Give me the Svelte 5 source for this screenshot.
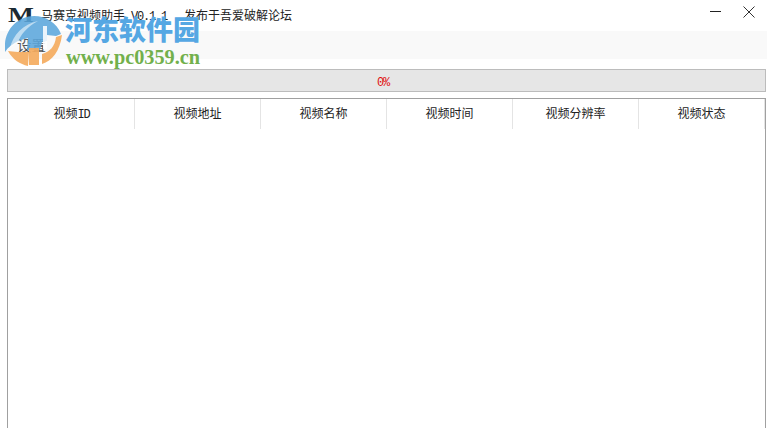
<script>
  const columns = [
    { cn: '视频', latin: 'ID' },
    { cn: '视频地址' },
    { cn: '视频名称' },
    { cn: '视频时间' },
    { cn: '视频分辨率' },
    { cn: '视频状态' }
  ];
</script>

<div class="window">
  <header class="titlebar">
    <span class="appicon">M</span>
    <span class="title">马赛克视频助手<span class="latin version">V0.1.1</span>发布于吾爱破解论坛</span>
    <div class="controls">
      <svg width="11" height="2" viewBox="0 0 11 2"><rect width="11" height="1" fill="#222" /></svg>
      <svg width="12" height="12" viewBox="0 0 12 12"><path d="M.5.5l11 11M11.500.5l-11 11" stroke="#333" fill="none" /></svg>
    </div>
  </header>
  <nav class="menu"><span>设置</span></nav>
  <div class="progress">0%</div>
  <section class="table">
    <div class="thead">
      {#each columns as c}
        <div class="th">{c.cn}{#if c.latin}<span class="latin">{c.latin}</span>{/if}</div>
      {/each}
    </div>
  </section>

  <div class="watermark">
    <svg class="logo" width="60" height="54" viewBox="0 0 60 54">
      <path d="M0 29C1 13 14 1 29 1c12 0 23 7 27 18l-5 2-9-1v6l-5 1-2 8H22l1-12-10 3C8 29 3 32 0 37Z" fill="#5ba6dc" opacity=".88" />
      <path d="M5 33C8 20 18 9 33 6 22 12 15 20 13 28 10 29 7 31 5 33Z" fill="#fff" opacity=".55" />
      <path d="M38 11h4v23h-4Z" fill="#fff" opacity=".85" />
      <path d="M3 36c5 9 12 13 20 15l1-14H13c-4 0-7-1-10-1Z" fill="#f4ab5e" opacity=".92" />
      <path d="M24 33h10v17H24Z" fill="#f4ab5e" opacity=".92" />
      <path d="M37 49c10-3 18-13 20-29l-6 2c-1 9-6 15-14 17Z" fill="#f4ab5e" opacity=".92" />
    </svg>
    <div class="wm-cn">河东软件园</div>
    <div class="wm-url">www.pc0359.cn</div>
  </div>
</div>

<style>
  :global(body) {
    margin: 0;
    background: #fff;
  }
  .window {
    position: relative;
    width: 767px;
    height: 428px;
    overflow: hidden;
    background: #fff;
    font-family: "Noto Sans CJK SC", "DejaVu Sans", sans-serif;
    color: #222;
    box-sizing: border-box;
    padding-left: 7px;
    padding-right: 1px;
  }
  .titlebar {
    height: 31px;
    margin-left: -7px;
    display: flex;
    align-items: center;
    position: relative;
  }
  .appicon {
    width: 33px;
    margin-left: 8px;
    margin-top: -2px;
    font: bold 22px/22px "Liberation Serif", serif;
    color: #1b2a33;
    transform: scaleX(1.25);
    transform-origin: left;
  }
  .title {
    font-size: 12px;
    white-space: pre;
    margin-top: -1px;
  }
  .latin {
    font-family: "Liberation Mono", monospace;
    font-size: 12px;
    letter-spacing: -1.2px;
  }
  .version {
    margin: 0 17px 0 6px;
  }
  .controls {
    margin-left: auto;
    margin-right: 11px;
    display: flex;
    align-items: center;
    gap: 22px;
    margin-top: -8px;
  }
  .menu {
    height: 28px;
    margin-left: -7px;
    margin-right: -1px;
    background: #f9f9f9;
    display: flex;
    align-items: center;
    padding-left: 17px;
    padding-bottom: 1px;
    box-sizing: border-box;
    font-size: 14.5px;
    color: #555;
  }
  .progress {
    height: 21px;
    margin-top: 10px;
    padding-right: 7px;
    background: #e6e6e6;
    border: 1px solid #bcbcbc;
    text-align: center;
    font: 12px/26px "Liberation Mono", monospace;
    letter-spacing: -1.2px;
    color: #e01010;
  }
  .table {
    height: 340px;
    margin-top: 6px;
    border: 1px solid #a0a0a0;
    border-bottom: 0;
    box-sizing: border-box;
  }
  .thead {
    display: grid;
    grid-template-columns: repeat(6, 126px);
    height: 30px;
    padding-left: 1px;
  }
  .th {
    border-right: 1px solid #e4e4e4;
    box-sizing: border-box;
    text-align: center;
    font-size: 12px;
    line-height: 28px;
  }
  .watermark {
    position: absolute;
    left: 0;
    top: 0;
    pointer-events: none;
  }
  .logo {
    position: absolute;
    left: 5px;
    top: 15px;
  }
  .wm-cn {
    position: absolute;
    left: 65px;
    top: 12px;
    font: 900 27px/34px "Noto Sans CJK SC", sans-serif;
    color: #55a7e3;
    white-space: nowrap;
  }
  .wm-url {
    position: absolute;
    left: 66px;
    top: 46px;
    font: bold 20.3px/22px "Liberation Serif", serif;
    color: #72b04c;
    white-space: nowrap;
  }
</style>
